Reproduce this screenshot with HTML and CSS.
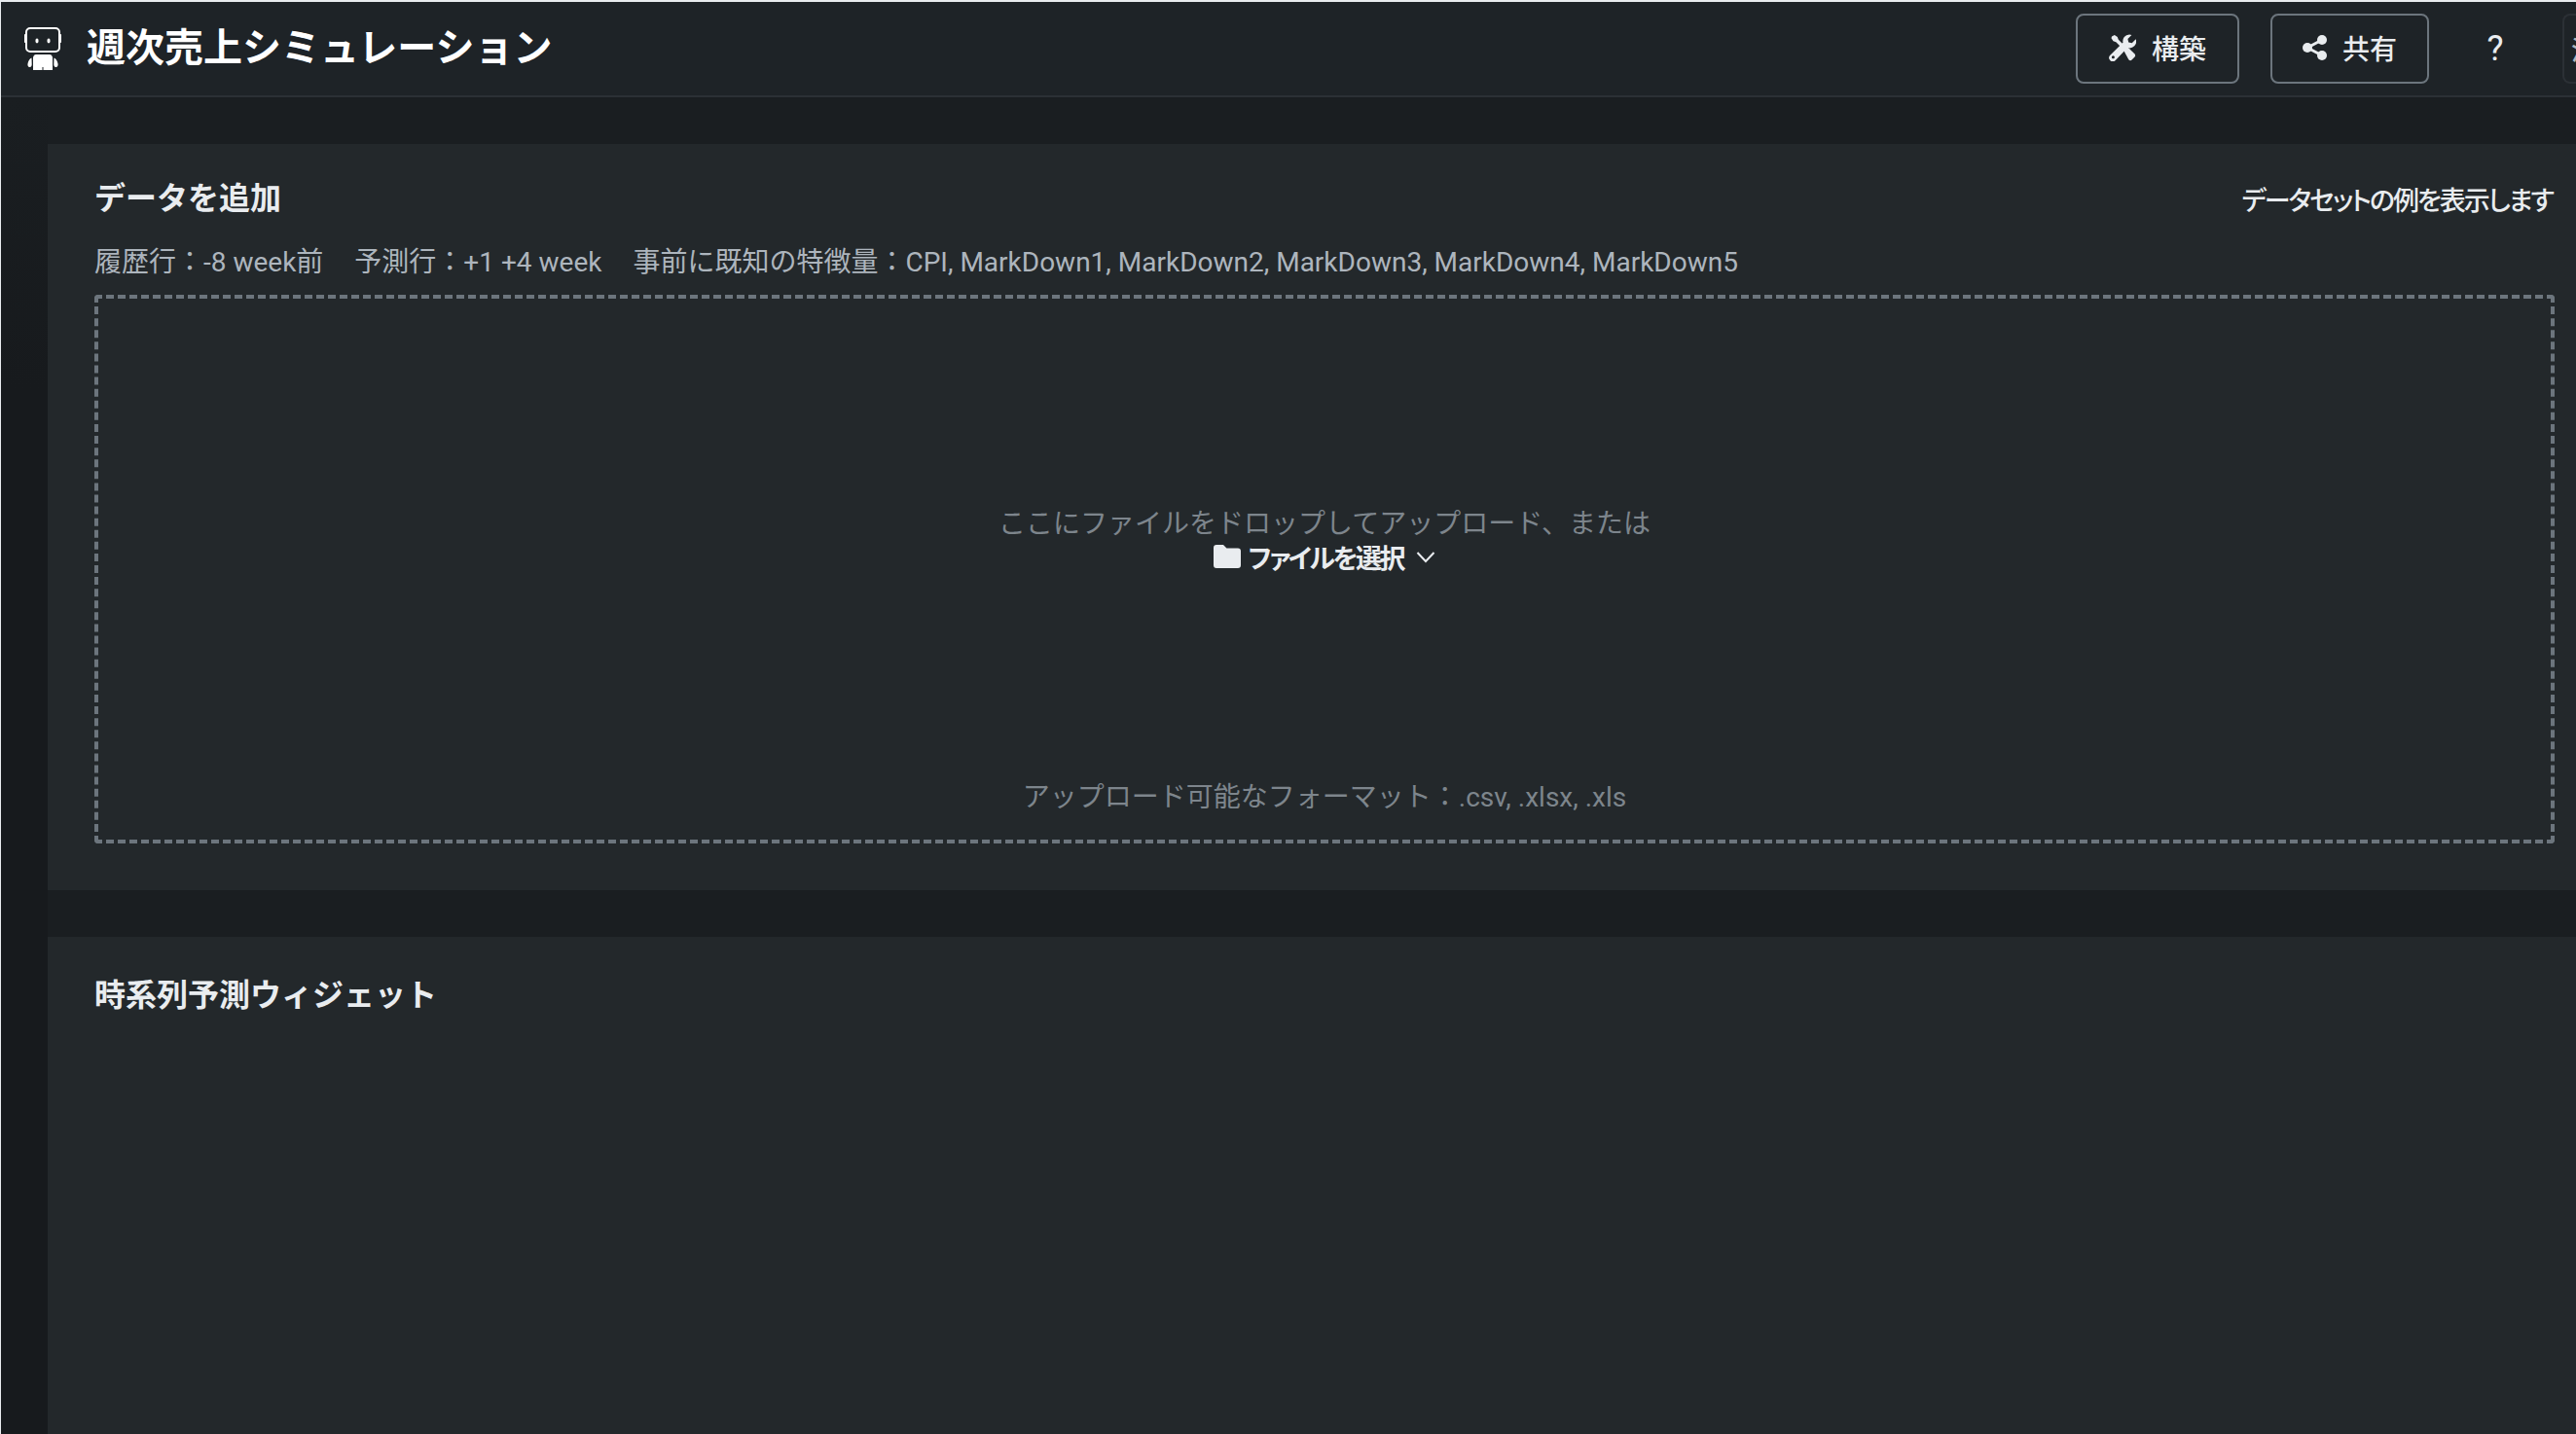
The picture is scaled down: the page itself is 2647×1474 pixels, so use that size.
FILE: index.html
```html
<!DOCTYPE html>
<html lang="ja">
<head>
<meta charset="utf-8">
<title>週次売上シミュレーション</title>
<link rel="stylesheet" href="styles.css">
</head>
<body>
<div class="app">
  <header class="topbar">
    <div class="brand">
      <svg class="logo" viewBox="0 0 38 44" aria-hidden="true">
        <rect x="2" y="1" width="34" height="24" rx="4" fill="none" stroke="#fff" stroke-width="2"/>
        <rect x="0" y="7" width="1.600" height="9" rx=".8" fill="#fff"/>
        <rect x="36.400" y="7" width="1.600" height="9" rx=".8" fill="#fff"/>
        <ellipse cx="13" cy="14" rx="1.600" ry="2.400" fill="#fff"/>
        <ellipse cx="25" cy="14" rx="1.600" ry="2.400" fill="#fff"/>
        <path d="M12 28h14c1.500 0 2.500 1 3 3v13h-9.500v-3h-1v3H9V31c.5-2 1.500-3 3-3z" fill="#fff"/>
        <path d="M7.500 31.500c-2 .5-3.500 3.500-4 6-.3 1.500.2 3.500 2 3.500s2.200-1.500 2.200-3zM30.500 31.500c2 .5 3.500 3.500 4 6 .3 1.500-.2 3.500-2 3.500s-2.200-1.500-2.200-3z" fill="#fff"/>
      </svg>
      <h1 class="app-title">週次売上シミュレーション</h1>
    </div>
    <div class="actions">
      <button class="btn btn-build">
        <svg class="icon-tools" viewBox="0 0 28 28" aria-hidden="true">
          <path d="M3 2.500l2.800-1.500 3 2 1 2.800 6 6-2.500 2.500-6-6-2.800-1-2-3z" fill="#e9ecef"/>
          <path d="M14.500 15.500l3.500-3.500 8.300 8.300a2.500 2.500 0 0 1 0 3.500l-2.500 2.500a2.500 2.500 0 0 1-3.500 0z" fill="#e9ecef"/>
          <path d="M21 .500a6.800 6.800 0 0 1 2.400.5l-4 4 .8 3.500 3.500.8 4-4a6.800 6.800 0 0 1-8.500 8.800L6.800 27a3.600 3.600 0 0 1-5.500-5.200L14.500 8.800A6.800 6.800 0 0 1 21 .500zM4.400 22.300a1.500 1.500 0 1 0 0 3 1.500 1.500 0 0 0 0-3z" fill="#e9ecef" fill-rule="evenodd"/>
        </svg>
        <span>構築</span>
      </button>
      <button class="btn btn-share">
        <svg class="icon-share" viewBox="0 0 25 26" aria-hidden="true">
          <circle cx="5" cy="13" r="5" fill="#e9ecef"/>
          <circle cx="20" cy="5" r="5" fill="#e9ecef"/>
          <circle cx="20" cy="21" r="5" fill="#e9ecef"/>
          <path d="M5 13L20 5M5 13l15 8" stroke="#e9ecef" stroke-width="3" fill="none"/>
        </svg>
        <span>共有</span>
      </button>
      <button class="btn-help">?</button>
      <button class="btn-cut">清</button>
    </div>
  </header>
  <div class="body-row">
    <div class="rail"></div>
    <main class="content">
      <section class="card">
        <div class="card-head">
          <h2 class="card-title">データを追加</h2>
          <a class="sample-link">データセットの例を表示します</a>
        </div>
        <p class="meta">
          <span>履歴行：-8 week前</span><span>予測行：+1 +4 week</span><span>事前に既知の特徴量：CPI, MarkDown1, MarkDown2, MarkDown3, MarkDown4, MarkDown5</span>
        </p>
        <div class="dropzone">
          <div class="drop-center">
            <div class="drop-text">ここにファイルをドロップしてアップロード、または</div>
            <div class="pick">
              <svg class="folder" viewBox="0 0 28 24" aria-hidden="true"><path fill="#e9ecef" d="M0 3a3 3 0 0 1 3-3h7l3.500 3.500H25a3 3 0 0 1 3 3V21a3 3 0 0 1-3 3H3a3 3 0 0 1-3-3z"/></svg>
              <span class="pick-label">ファイルを選択</span>
              <svg class="chev" viewBox="0 0 20 13" aria-hidden="true"><path d="M1.500 2l8.500 9 8.500-9" fill="none" stroke="#e9ecef" stroke-width="2"/></svg>
            </div>
          </div>
          <div class="formats">アップロード可能なフォーマット：.csv, .xlsx, .xls</div>
        </div>
      </section>
      <section class="card card-widget">
        <h2 class="card-title">時系列予測ウィジェット</h2>
      </section>
    </main>
  </div>
</div>
</body>
</html>
```
FILE: styles.css
```css
* { box-sizing: border-box; }
html, body { margin: 0; height: 100%; overflow: hidden; background: #e9ecef; }
body { font-family: Roboto, "Noto Sans CJK JP", sans-serif; color: #e9ecef; }
.app { height: 1474px; padding: 2px 0 0 1px; display: flex; flex-direction: column; }
.topbar { height: 98px; flex: none; background: #1e2327; border-bottom: 2px solid #2b3035; display: flex; justify-content: space-between; align-items: center; padding: 0 0 0 24px; }
.brand { display: flex; align-items: center; gap: 26px; }
.logo { width: 38px; height: 44px; display: block; }
.app-title { margin: 0; font-size: 40px; font-weight: 700; color: #fff; line-height: 1; }
.actions { display: flex; align-items: center; overflow: hidden; }
.btn { height: 72px; background: transparent; border: 2px solid #6c757d; border-radius: 8px; color: #e9ecef; font: 500 28px Roboto, "Noto Sans CJK JP", sans-serif; display: flex; align-items: center; justify-content: center; gap: 16px; padding: 0 0 2px; }
.btn-build { width: 168px; margin-right: 32px; }
.btn-share { width: 163px; margin-right: 56px; }
.icon-tools { width: 28px; height: 28px; display: block; }
.icon-share { width: 25px; height: 26px; display: block; }
.btn-help { background: none; border: 0; padding: 0; color: #e9ecef; font: 400 36px Roboto, sans-serif; width: 24px; margin-right: 57px; }
.btn-cut { height: 72px; width: 40px; flex: none; background: transparent; border: 2px solid #2b3035; border-right: 0; border-radius: 8px 0 0 8px; color: #adb5bd; font: 500 27px "Noto Sans CJK JP", sans-serif; padding: 0 0 0 7px; text-align: left; overflow: hidden; margin-right: -26px; }
.body-row { flex: 1; display: flex; min-height: 0; }
.rail { width: 48px; flex: none; background: linear-gradient(#1a1e21, #171a1d 300px); }
.content { flex: 1; background: #1a1e21; padding-top: 48px; display: flex; flex-direction: column; gap: 48px; min-width: 0; }
.card { background: #23282b; padding: 32px 22px 48px 48px; }
.card-head { display: flex; justify-content: space-between; align-items: center; height: 48px; }
.card-title { margin: 0; font-size: 32px; font-weight: 700; line-height: 48px; color: #e9ecef; }
.sample-link { font-size: 27px; font-weight: 500; font-feature-settings: "palt"; letter-spacing: -2px; margin-right: 2px; color: #e9ecef; }
.meta { margin: 22px 0 0; font-size: 28px; line-height: 40px; color: #adb5bd; display: flex; gap: 32px; }
.dropzone { margin-top: 13px; height: 564px; border: 4px dashed #6c757d; border-radius: 4px; position: relative; display: flex; flex-direction: column; align-items: center; }
.drop-center { margin-top: 214px; display: flex; flex-direction: column; align-items: center; }
.drop-text { font-size: 28px; line-height: 36px; color: #7d858c; }
.pick { display: flex; align-items: center; gap: 8px; height: 30px; }
.folder { width: 28px; height: 24px; display: block; }
.pick-label { font-size: 27px; font-weight: 700; font-feature-settings: "palt"; letter-spacing: -2.400px; color: #e9ecef; }
.chev { width: 20px; height: 13px; display: block; margin-left: 5px; }
.formats { position: absolute; left: 0; right: 0; bottom: 25px; text-align: center; font-size: 28px; line-height: 36px; color: #7d858c; }
.card-widget { flex: 1; padding-top: 36px; }
```
